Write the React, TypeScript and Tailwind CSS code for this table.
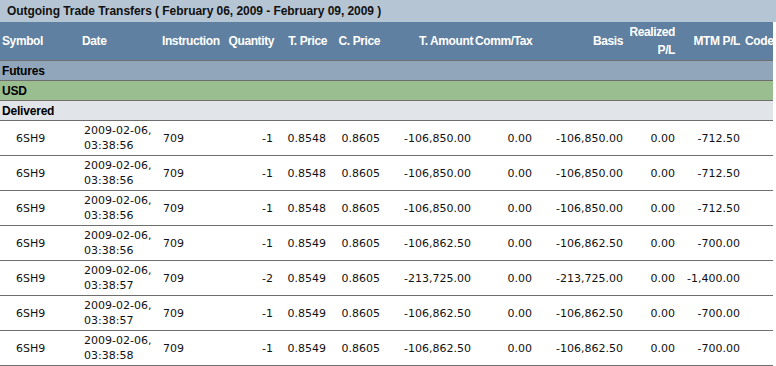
const COLS =
  "grid grid-cols-[80px_80px_66px_51px_53px_53px_92px_60px_91px_52px_65px_30px]";

type Trade = {
  symbol: string;
  date: string;
  time: string;
  instruction: string;
  qty: string;
  tPrice: string;
  cPrice: string;
  amount: string;
  comm: string;
  basis: string;
  realized: string;
  mtm: string;
};

const trades: Trade[] = [
  { symbol: "6SH9", date: "2009-02-06,", time: "03:38:56", instruction: "709", qty: "-1", tPrice: "0.8548", cPrice: "0.8605", amount: "-106,850.00", comm: "0.00", basis: "-106,850.00", realized: "0.00", mtm: "-712.50" },
  { symbol: "6SH9", date: "2009-02-06,", time: "03:38:56", instruction: "709", qty: "-1", tPrice: "0.8548", cPrice: "0.8605", amount: "-106,850.00", comm: "0.00", basis: "-106,850.00", realized: "0.00", mtm: "-712.50" },
  { symbol: "6SH9", date: "2009-02-06,", time: "03:38:56", instruction: "709", qty: "-1", tPrice: "0.8548", cPrice: "0.8605", amount: "-106,850.00", comm: "0.00", basis: "-106,850.00", realized: "0.00", mtm: "-712.50" },
  { symbol: "6SH9", date: "2009-02-06,", time: "03:38:56", instruction: "709", qty: "-1", tPrice: "0.8549", cPrice: "0.8605", amount: "-106,862.50", comm: "0.00", basis: "-106,862.50", realized: "0.00", mtm: "-700.00" },
  { symbol: "6SH9", date: "2009-02-06,", time: "03:38:57", instruction: "709", qty: "-2", tPrice: "0.8549", cPrice: "0.8605", amount: "-213,725.00", comm: "0.00", basis: "-213,725.00", realized: "0.00", mtm: "-1,400.00" },
  { symbol: "6SH9", date: "2009-02-06,", time: "03:38:57", instruction: "709", qty: "-1", tPrice: "0.8549", cPrice: "0.8605", amount: "-106,862.50", comm: "0.00", basis: "-106,862.50", realized: "0.00", mtm: "-700.00" },
  { symbol: "6SH9", date: "2009-02-06,", time: "03:38:58", instruction: "709", qty: "-1", tPrice: "0.8549", cPrice: "0.8605", amount: "-106,862.50", comm: "0.00", basis: "-106,862.50", realized: "0.00", mtm: "-700.00" },
];

const GroupRow = ({ label, bg }: { label: string; bg: string }) => (
  <div
    className={`h-[20px] w-[773px] flex items-center pl-[2px] border-b border-[#6e6e6e] text-[12px] font-bold text-black tracking-[-0.2px] ${bg}`}
  >
    {label}
  </div>
);

export default function App() {
  return (
    <div className="w-[776px] h-[366px] overflow-hidden bg-white font-['Liberation_Sans',Arial,sans-serif]">
      {/* title */}
      <div className="h-[22px] w-[776px] flex items-center pl-[7px] bg-[#b6c5d3] text-[12px] font-bold text-[#111] tracking-[-0.05px]">
        Outgoing Trade Transfers ( February 06, 2009 - February 09, 2009 )
      </div>

      {/* column headers */}
      <div
        className={`${COLS} h-[39px] w-[773px] items-center bg-[#5f80a0] border-b border-[#6e6e6e] text-[12px] font-bold text-white leading-[18px] tracking-[-0.4px] whitespace-nowrap`}
      >
        <div className="pl-[2px]">Symbol</div>
        <div className="pl-[2px]">Date</div>
        <div className="pl-[2px]">Instruction</div>
        <div className="text-right pr-[3px]">Quantity</div>
        <div className="text-right pr-[3px]">T. Price</div>
        <div className="text-right pr-[3px]">C. Price</div>
        <div className="text-right pr-[2px]">T. Amount</div>
        <div className="text-right pr-[3px]">Comm/Tax</div>
        <div className="text-right pr-[3px]">Basis</div>
        <div className="text-right pr-[3px]">
          Realized
          <br />
          P/L
        </div>
        <div className="text-right pr-[3px]">MTM P/L</div>
        <div className="pl-[2px]">Code</div>
      </div>

      <GroupRow label="Futures" bg="bg-[#91a6bb]" />
      <GroupRow label="USD" bg="bg-[#9bbe91]" />
      <GroupRow label="Delivered" bg="bg-[#e1e4e8]" />

      {/* rows */}
      {trades.map((t, i) => (
        <div
          key={i}
          className={`${COLS} h-[35px] w-[773px] items-center border-b border-[#6e6e6e] font-['DejaVu_Sans',Verdana,sans-serif] text-[11px] leading-[15px] text-[#111] whitespace-nowrap`}
        >
          <div className="pl-[16px]">{t.symbol}</div>
          <div className="pl-[4px]">
            {t.date}
            <br />
            {t.time}
          </div>
          <div className="pl-[3px]">{t.instruction}</div>
          <div className="text-right pr-[4px]">{t.qty}</div>
          <div className="text-right pr-[4px]">{t.tPrice}</div>
          <div className="text-right pr-[3px]">{t.cPrice}</div>
          <div className="text-right pr-[4px]">{t.amount}</div>
          <div className="text-right pr-[3px]">{t.comm}</div>
          <div className="text-right pr-[3px]">{t.basis}</div>
          <div className="text-right pr-[3px]">{t.realized}</div>
          <div className="text-right pr-[3px]">{t.mtm}</div>
          <div />
        </div>
      ))}
    </div>
  );
}
